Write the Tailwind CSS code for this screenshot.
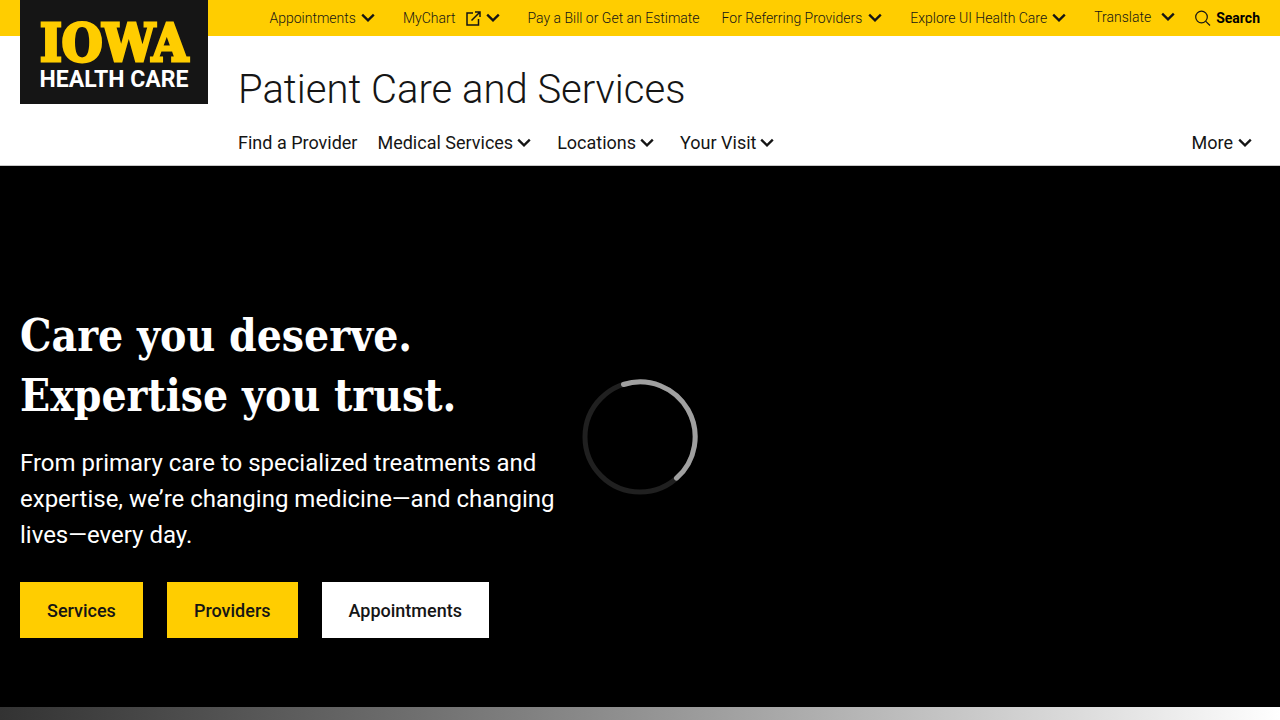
<!DOCTYPE html>
<html lang="en">
<head>
<meta charset="utf-8">
<meta name="viewport" content="width=device-width, initial-scale=1">
<title>Patient Care and Services</title>
<script src="https://cdn.jsdelivr.net/npm/@tailwindcss/browser@4"></script>
</head>
<body class="bg-black font-['Roboto',sans-serif] text-[#151515]">
<svg class="hidden" aria-hidden="true">
  <symbol id="chevron" viewBox="0 0 14 10"><path d="M1.2 1.6 7 7.4l5.800-5.800" fill="none" stroke="currentColor" stroke-width="2.300"/></symbol>
</svg>
<header class="relative border-b border-[#c8c8c8] bg-white">
  <a href="#" aria-label="Iowa Health Care" class="absolute top-0 left-5 flex h-26 w-47 flex-col items-center bg-[#151515] pt-[17px]">
    <svg class="h-[72px] w-[148px] overflow-visible" viewBox="0 0 148 72" role="img" aria-label="Iowa Health Care">
      <text x="74" y="44" text-anchor="middle" class="fill-[#ffcd00] stroke-[#ffcd00] stroke-3 font-['DejaVu_Serif_Condensed','DejaVu_Serif',serif] text-[52px] font-bold">IOWA</text>
      <text x="74" y="70" text-anchor="middle" class="fill-white font-['Roboto',sans-serif] text-[23px] font-bold">HEALTH CARE</text>
    </svg>
  </a>
  <nav aria-label="Utility" class="flex h-9 items-center justify-end bg-[#ffcd00] pr-5 text-sm font-light whitespace-nowrap">
    <button class="mr-7 flex items-center gap-[5px]">Appointments<svg class="h-[10px] w-[14px]"><use href="#chevron"/></svg></button>
    <a href="#" class="mr-[5px] flex items-center gap-[10px]">MyChart
      <svg class="size-[15px]" viewBox="0 0 15 15" fill="none" stroke="currentColor" stroke-width="1.500"><path d="M7 2H1v12h11.500V8M5.500 9.500 14 1M9 1h5v5"/></svg></a>
    <button class="mr-7" aria-label="MyChart menu"><svg class="h-[10px] w-[14px]"><use href="#chevron"/></svg></button>
    <a href="#" class="mr-[22px]">Pay a Bill or Get an Estimate</a>
    <button class="mr-7 flex items-center gap-[6px]">For Referring Providers<svg class="h-[10px] w-[14px]"><use href="#chevron"/></svg></button>
    <button class="mr-7 flex items-center gap-[5px]">Explore UI Health Care<svg class="h-[10px] w-[14px]"><use href="#chevron"/></svg></button>
    <button class="mr-5 flex items-center gap-[10px] pb-[2px]">Translate<svg class="h-[10px] w-[14px]"><use href="#chevron"/></svg></button>
    <button class="flex items-center gap-[5px] font-bold text-black"><svg class="size-[16px]" viewBox="0 0 16 16" fill="none" stroke="#151515" stroke-width="1.200"><circle cx="6.500" cy="7" r="5.800"/><path d="m10.800 11.300 4.200 4.200"/></svg>Search</button>
  </nav>
  <div class="pr-5 pl-[238px]">
    <h1 class="pt-[30px] text-[40px] leading-[48px] font-light"><a href="#">Patient Care and Services</a></h1>
    <nav aria-label="Main" class="flex items-center pt-[15px] pb-[9px] text-lg leading-[27px] whitespace-nowrap">
      <a href="#" class="mr-5">Find a Provider</a>
      <button class="mr-[26px] flex items-center gap-1">Medical Services<svg class="h-[10px] w-[14px]"><use href="#chevron"/></svg></button>
      <button class="mr-[26px] flex items-center gap-1">Locations<svg class="h-[10px] w-[14px]"><use href="#chevron"/></svg></button>
      <button class="flex items-center gap-1">Your Visit<svg class="h-[10px] w-[14px]"><use href="#chevron"/></svg></button>
      <button class="mr-2 ml-auto flex items-center gap-[5px]">More<svg class="h-[10px] w-[14px]"><use href="#chevron"/></svg></button>
    </nav>
  </div>
</header>
<main>
  <section class="relative bg-black px-5 pt-[140px] pb-[69px] text-white">
    <h2 class="font-['DejaVu_Serif_Condensed','DejaVu_Serif',serif] text-[44px] leading-[60px] font-bold">Care you deserve.<br>Expertise you trust.</h2>
    <p class="mt-[19px] max-w-[560px] text-2xl leading-9">From primary care to specialized treatments and expertise, we’re changing medicine—and changing lives—every day.</p>
    <div class="mt-[29px] flex flex-wrap gap-6 text-lg leading-[28px] font-medium text-[#151515]">
      <a href="#" class="bg-[#ffcd00] px-[27px] pt-[15px] pb-[13px]">Services</a>
      <a href="#" class="bg-[#ffcd00] px-[27px] pt-[15px] pb-[13px]">Providers</a>
      <a href="#" class="bg-white px-[27px] pt-[15px] pb-[13px]">Appointments</a>
    </div>
    <svg class="absolute top-1/2 left-1/2 size-[116px] -translate-1/2" viewBox="-58 -58 116 116" fill="none" stroke-width="5" role="img" aria-label="Loading">
      <circle r="55" stroke="#202020"/>
      <path d="M-16.500-52.500A55 55 0 0 1 36.500 41.200" stroke="#a0a0a0" stroke-linecap="round"/>
    </svg>
  </section>
  <div class="h-[13px] bg-linear-to-r from-[#333] to-white"></div>
</main>
</body>
</html>
